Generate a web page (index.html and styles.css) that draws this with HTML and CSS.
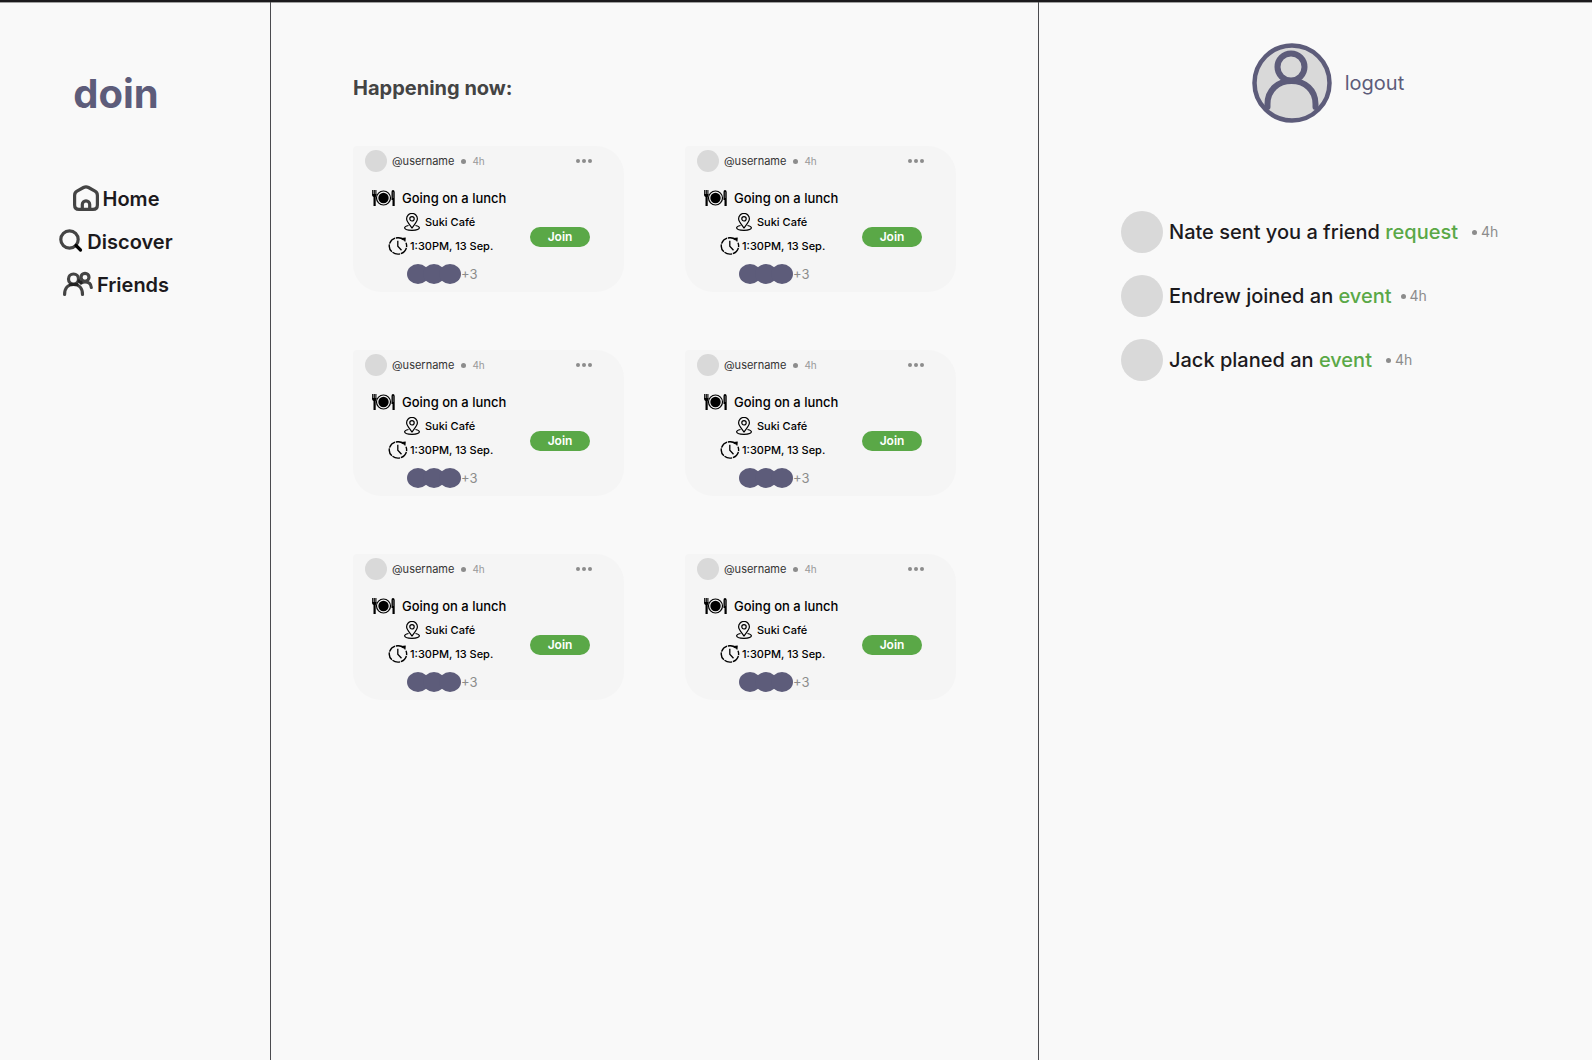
FILE: index.html
```html
<!DOCTYPE html>
<html lang="en">
<head>
<meta charset="utf-8">
<meta name="viewport" content="width=device-width, initial-scale=1">
<title>doin</title>
<link rel="stylesheet" href="styles.css">
</head>
<body>
<svg class="sprite" aria-hidden="true">
  <symbol id="plate" viewBox="0 0 24 16">
    <path d="M.7 0v5M2.300 0v5M3.900 0v5" stroke="#000" stroke-width="1.100"/>
    <path d="M.2 4h4.200v2l-.7 1v9H1.500V7L.2 6z" fill="#000"/>
    <circle cx="11.500" cy="8" r="7" fill="none" stroke="#000" stroke-width="1.200"/>
    <circle cx="11.500" cy="8" r="5.200" fill="#000"/>
    <path d="M19.500 2q0-2 1.500-2t1.700 2v14h-2.200v-6h-1z" fill="#000"/>
    <path d="M21.200 2v6" stroke="#999" stroke-width=".6"/>
  </symbol>
  <symbol id="pin" viewBox="0 0 16 18">
    <g fill="none" stroke="#000" stroke-width="1.200">
      <path d="M8 15C5 11 2.600 8.500 2.600 5.800a5.400 5.400 0 0 1 10.800 0C13.400 8.500 11 11 8 15z"/>
      <circle cx="8" cy="5.800" r="2.200"/>
      <path d="M4.500 12.500C2 13 .6 13.800.6 14.800c0 1.500 3.200 2.500 7.400 2.500s7.400-1 7.400-2.500c0-1-1.400-1.800-3.900-2.300"/>
    </g>
  </symbol>
  <symbol id="clock" viewBox="0 0 20 18">
    <g fill="none" stroke="#000" stroke-width="1.400">
      <path d="M15.500 2.600A8.700 8.200 0 1 0 18 5.800" stroke-dasharray="8 .8"/>
      <path d="M9.800 3.800v5.500l3.700 4" stroke-width="1.300"/>
      <path d="M13.500 1.300L17.500.8l-.3 3.700z" fill="#000" stroke-width=".5"/>
    </g>
  </symbol>
</svg>
<div class="app">
  <aside class="sidebar">
    <h1 class="logo">doin</h1>
    <nav class="nav">
      <a class="nav-link" href="#home">
        <svg width="26" height="28" viewBox="0 0 26 28" fill="none" stroke="#444" stroke-width="3.200" stroke-linejoin="round" aria-hidden="true">
          <path d="M1.600 10.500Q1.600 7.500 4 6.200L10.500 2.500Q13 1.100 15.500 2.500L22 6.200Q24.400 7.500 24.400 10.500V20Q24.400 24.400 20 24.400H6Q1.600 24.400 1.600 20z"/>
          <path d="M9.300 24V19.500a3.700 3.700 0 0 1 7.400 0V24"/>
        </svg>Home</a>
      <a class="nav-link" href="#discover">
        <svg width="24" height="28" viewBox="0 0 24 28" fill="none" stroke-width="3.200" stroke-linecap="round" aria-hidden="true">
          <circle cx="10.500" cy="11.500" r="8.700" stroke="#444"/>
          <path d="M17 17.500l4.500 4.500" stroke="#000"/>
        </svg>Discover</a>
      <a class="nav-link" href="#friends">
        <svg width="30" height="28" viewBox="0 0 30 28" fill="none" stroke="#444" stroke-width="3.200" stroke-linecap="round" aria-hidden="true">
          <circle cx="22" cy="6.300" r="4"/>
          <path d="M18 12Q20 11 22 11 28 11 28.300 16.500"/>
          <circle cx="10.500" cy="8" r="5"/>
          <path d="M1.600 23.500C1.600 17 5 13.500 10.500 13.500S19.500 17 19.500 23.500"/>
          <path d="M7.500 13.500h6.500M16 10l2 1.500" stroke="#222"/>
        </svg>Friends</a>
    </nav>
  </aside>

  <main class="feed">
    <h2 class="feed-title">Happening now:</h2>
    <div class="cards" id="cards"></div>
  </main>

  <aside class="panel">
    <div class="account">
      <svg class="account-avatar" viewBox="0 0 80 80" fill="none" stroke="#5d5c7a" stroke-linecap="round" aria-hidden="true">
        <circle cx="40" cy="40" r="37.500" fill="#d9d9d9" stroke-width="4.500"/>
        <circle cx="39" cy="24" r="13.500" stroke-width="6"/>
        <path d="M15.500 64V61C15.500 47 26 38 39.500 38S63.500 47 63.500 61V64" stroke-width="6"/>
      </svg>
      <a class="logout" href="#logout">logout</a>
    </div>
    <ul class="notices">
      <li class="notice"><span class="notice-avatar"></span><p>Nate sent you a friend <a href="#request">request</a></p><time class="ago">4h</time></li>
      <li class="notice notice-tight"><span class="notice-avatar"></span><p>Endrew joined an <a href="#event">event</a></p><time class="ago">4h</time></li>
      <li class="notice"><span class="notice-avatar"></span><p>Jack planed an <a href="#event">event</a></p><time class="ago">4h</time></li>
    </ul>
  </aside>
</div>

<template id="card">
  <article class="card">
    <header class="card-head">
      <span class="card-avatar"></span>
      <span class="card-user">@username</span>
      <time class="card-ago">4h</time>
      <button class="more" type="button" aria-label="More options"><i></i><i></i><i></i></button>
    </header>
    <div class="card-body">
      <div class="details">
        <h3 class="row title"><svg width="24" height="16" aria-hidden="true"><use href="#plate"/></svg>Going on a lunch</h3>
        <p class="row place"><svg width="16" height="18" aria-hidden="true"><use href="#pin"/></svg>Suki Café</p>
        <p class="row when"><svg width="20" height="18" aria-hidden="true"><use href="#clock"/></svg>1:30PM, 13 Sep.</p>
        <p class="row people"><span class="person"></span><span class="person"></span><span class="person"></span>+3</p>
      </div>
      <button class="join" type="button">Join</button>
    </div>
  </article>
</template>
<script src="app.js"></script>
</body>
</html>
```
FILE: styles.css
```css
* { box-sizing: border-box; }

body {
  margin: 0;
  background: #f9f9f9;
  color: #1c1a1d;
  font-family: Inter, "Liberation Sans", sans-serif;
}

h1, h2, h3, p, ul { margin: 0; padding: 0; }
a { text-decoration: none; }
button { border: 0; padding: 0; font: inherit; cursor: pointer; }
svg { flex: none; }

.sprite { display: none; }

.app {
  display: grid;
  grid-template-columns: 271fr 768fr 553fr;
  min-height: 100vh;
  border-top: 2px solid #1c1a1d;
  box-shadow: inset 0 1px #a0a0a0;
}

/* Sidebar */
.sidebar {
  padding: 68px 38px 0 0;
  border-right: 1px solid #4b4b4f;
}

.logo {
  color: #5d5c7a;
  font-size: 40px;
  line-height: 48px;
  font-weight: 700;
  text-align: center;
}

.nav {
  display: flex;
  flex-direction: column;
  align-items: center;
  gap: 15px;
  margin-top: 67px;
}

.nav-link {
  display: flex;
  align-items: center;
  gap: 4px;
  color: #1c1a1d;
  font-size: 20px;
  line-height: 24px;
  font-weight: 600;
}

/* Feed */
.feed {
  padding: 74px 82px 40px;
  border-right: 1px solid #4b4b4f;
}

.feed-title {
  color: #444;
  font-size: 20px;
  line-height: 24px;
  font-weight: 700;
}

.cards {
  display: grid;
  grid-template-columns: 1fr 1fr;
  gap: 58px 61px;
  margin-top: 46px;
}

.card {
  padding-bottom: 2px;
  border-radius: 4px 28px 28px 28px;
  background: #f5f5f5;
}

.card-head {
  display: flex;
  align-items: center;
  height: 30px;
  padding: 0 32px 0 12px;
  font-size: 11px;
}

.card-avatar {
  width: 22px;
  height: 22px;
  margin-right: 5px;
  border-radius: 50%;
  background: #d9d9d9;
}

.card-user { color: #333; }

.card-ago {
  display: flex;
  align-items: center;
  gap: 6px;
  margin-left: 7px;
  color: #999;
  font-size: 10px;
}

.card-ago::before,
.ago::before {
  content: "";
  width: 5px;
  height: 5px;
  border-radius: 50%;
  background: #8c8c8c;
}

.more {
  display: flex;
  gap: 2px;
  margin-left: auto;
  background: none;
}

.more i {
  width: 4px;
  height: 4px;
  border-radius: 50%;
  background: #8c8c8c;
}

.card-body {
  display: flex;
  align-items: center;
  justify-content: space-between;
  margin-top: 10px;
  padding: 0 34px 0 19px;
}

.row {
  display: flex;
  align-items: center;
  height: 24px;
  color: #000;
  font-size: 11px;
  font-weight: 500;
}

.title { gap: 6px; font-size: 13px; }
.place { gap: 5px; padding-left: 32px; }
.when { gap: 2px; padding-left: 16px; }

.people {
  height: 32px;
  padding-left: 35px;
  color: #8c8c8c;
  font-size: 13px;
  font-weight: 400;
}

.person {
  width: 22px;
  height: 20px;
  margin-right: -6px;
  border-radius: 50%;
  background: #5d5c7a;
}

.person:nth-child(3) { margin-right: 0; }

.join {
  width: 60px;
  height: 20px;
  margin-bottom: 2px;
  border-radius: 10px;
  background: #5aa847;
  color: #fff;
  font-size: 12px;
  line-height: 20px;
  font-weight: 600;
}

/* Account and notifications */
.panel { padding: 41px 0 0; }

.account {
  display: flex;
  align-items: center;
  justify-content: center;
  gap: 13px;
  padding-left: 25px;
}

.account-avatar { width: 80px; height: 80px; }

.logout {
  color: #5d5c7a;
  font-size: 20px;
  line-height: 24px;
}

.notices {
  display: flex;
  flex-direction: column;
  gap: 22px;
  margin-top: 88px;
  padding-left: 82px;
  list-style: none;
}

.notice {
  display: flex;
  align-items: center;
  font-size: 20px;
  line-height: 24px;
  font-weight: 500;
}

.notice a { color: #5aa847; }

.notice-avatar {
  flex: none;
  width: 42px;
  height: 42px;
  margin-right: 6px;
  border-radius: 50%;
  background: #d9d9d9;
}

.ago {
  display: flex;
  align-items: center;
  gap: 4px;
  margin-left: 14px;
  color: #8c8c8c;
  font-size: 14px;
  font-weight: 400;
}

.notice-tight .ago { margin-left: 9px; }
```
FILE: app.js
```js
const list = document.getElementById("cards");
const card = document.getElementById("card");
for (let i = 0; i < 6; i++) list.append(card.content.cloneNode(true));
```
